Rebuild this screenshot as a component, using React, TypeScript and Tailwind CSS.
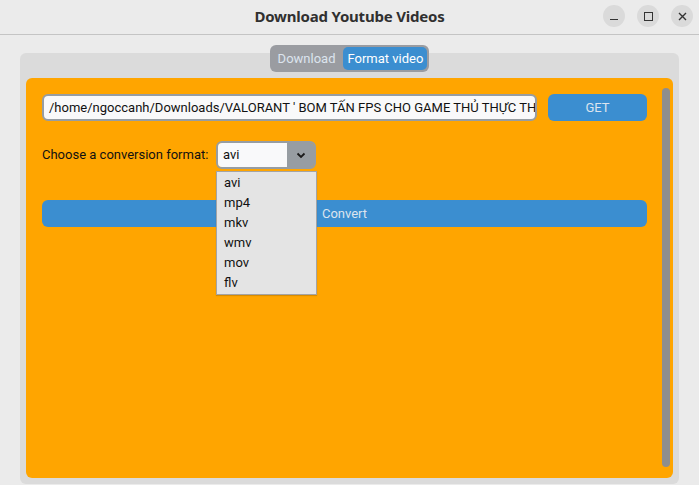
import React from "react";

const formats = ["avi", "mp4", "mkv", "wmv", "mov", "flv"];

function TitleBar() {
  return (
    <div className="grid h-[35px] shrink-0 grid-cols-[1fr_auto_1fr] items-center border-b border-[#c4c4c4] bg-[#ebebeb]">
      <div />
      <div className="pb-[2px] text-[15px] font-bold tracking-[-0.2px] text-[#303030] [font-family:'Noto_Sans',sans-serif]">
        Download Youtube Videos
      </div>
      <div className="flex items-center justify-end gap-[12px] pr-[6px] pb-[2px]">
        <div className="flex h-[22px] w-[22px] items-end justify-center rounded-full bg-[#dadada] pb-[7px]">
          <div className="h-[1.5px] w-[8px] bg-[#333]" />
        </div>
        <div className="flex h-[22px] w-[22px] items-center justify-center rounded-full bg-[#dadada]">
          <div className="h-[9px] w-[9px] border-[1.5px] border-[#333]" />
        </div>
        <div className="flex h-[22px] w-[22px] items-center justify-center rounded-full bg-[#dadada]">
          <svg width="9" height="9" viewBox="0 0 9 9">
            <path d="M1 1L8 8M8 1L1 8" stroke="#333" strokeWidth="1.4" />
          </svg>
        </div>
      </div>
    </div>
  );
}

export default function App() {
  return (
    <div className="flex h-[485px] w-[699px] flex-col overflow-hidden bg-[#ebebeb] [font-family:Roboto,'Liberation_Sans',sans-serif]">
      <TitleBar />

      <div className="flex flex-1 flex-col px-[20px] pt-[10px]">
        {/* Segmented tab switch */}
        <div className="relative z-10 flex justify-center">
          <div className="flex h-[27px] items-center gap-[2px] rounded-[6px] bg-[#9a9ca1] p-[2px] text-[13px]">
            <div className="px-[6px] text-[#dce4ee]">Download</div>
            <div className="flex h-[23px] items-center rounded-[5px] bg-[#3b8ed0] px-[4px] text-white">
              Format video
            </div>
          </div>
        </div>

        {/* Tab panel */}
        <div className="-mt-[19px] flex h-[431px] flex-col rounded-[6px] bg-[#dbdbdb] px-[6px] pt-[25px] pb-[6px]">
          <div className="flex flex-1 rounded-[6px] bg-[#ffa500]">
            <div className="relative flex flex-1 flex-col gap-[20px] pt-[16px] pl-[16px] pr-[15px]">
              <div className="flex gap-[11px]">
                <div className="flex h-[27px] w-[495px] items-center overflow-hidden rounded-[6px] border-2 border-[#979da2] bg-[#f9f9fa] px-[5px] text-[13px] whitespace-nowrap text-[#111]">
                  /home/ngoccanh/Downloads/VALORANT ' BOM TẤN FPS CHO GAME THỦ THỰC TH
                </div>
                <div className="flex h-[27px] flex-1 items-center justify-center rounded-[6px] bg-[#3b8ed0] text-[13px] text-[#dce4ee]">
                  GET
                </div>
              </div>

              <div className="flex items-center gap-[10px]">
                <div className="w-[164px] whitespace-nowrap text-[13px] text-[#111]">Choose a conversion format:</div>
                <div className="relative">
                  <div className="flex h-[28px] w-[100px] overflow-hidden rounded-[6px] border-2 border-[#979da2]">
                    <div className="flex flex-1 items-center bg-[#f9f9fa] pl-[5px] text-[13px] text-[#111]">avi</div>
                    <div className="flex w-[27px] items-center justify-center bg-[#979da2]">
                      <svg width="10" height="7" viewBox="0 0 10 7">
                        <path d="M1.5 1.5L5 5L8.5 1.5" fill="none" stroke="#1a1a1a" strokeWidth="1.8" />
                      </svg>
                    </div>
                  </div>
                  {/* open dropdown list */}
                  <div className="absolute top-[30px] left-0 z-20 flex w-[101px] flex-col border border-[#a4a4a4] bg-[#e4e4e4] py-[1px] shadow-[0_1px_1px_rgba(0,0,0,0.15)]">
                    {formats.map((f) => (
                      <div key={f} className="flex h-[20px] items-center pl-[7px] text-[13px] text-[#111]">
                        {f}
                      </div>
                    ))}
                  </div>
                </div>
              </div>

              <div className="mt-[11px] flex h-[27px] items-center justify-center rounded-[6px] bg-[#3b8ed0] text-[13px] text-[#dce4ee]">
                Convert
              </div>
            </div>
            <div className="flex w-[11px] shrink-0 pt-[10px] pb-[11px]">
              <div className="w-[8px] rounded-full bg-[#8e8e8e]" />
            </div>
          </div>
        </div>
      </div>
    </div>
  );
}
